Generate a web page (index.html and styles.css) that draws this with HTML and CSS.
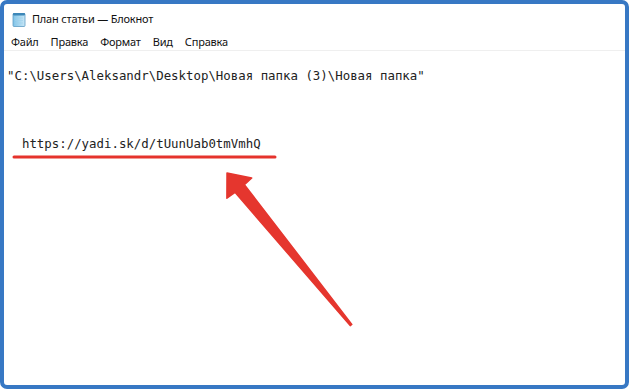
FILE: index.html
```html
<!DOCTYPE html>
<html>
<head>
	<meta charset="utf-8">
	<title>План статьи — Блокнот</title>
	<link rel="stylesheet" href="styles.css">
</head>
<body>
	<div class="window">
		<div class="titlebar">
			<svg class="appicon" width="14" height="15" viewBox="0 0 14 15">
				<defs>
					<linearGradient id="pad" x1="0" y1="0" x2="1" y2="0">
						<stop offset="0" stop-color="#7fc3e8"/>
						<stop offset="1" stop-color="#c9e7f6"/>
					</linearGradient>
				</defs>
				<rect x="1" y="1.5" width="12" height="13" rx="1" fill="url(#pad)" stroke="#5d9cc4" stroke-width="0.8"/>
				<rect x="1" y="1" width="12" height="2.4" rx="0.8" fill="#3d87b8"/>
				<line x1="3" y1="6" x2="11" y2="6" stroke="#9fd0ea" stroke-width="0.6"/>
				<line x1="3" y1="8.5" x2="11" y2="8.5" stroke="#9fd0ea" stroke-width="0.6"/>
				<line x1="3" y1="11" x2="11" y2="11" stroke="#9fd0ea" stroke-width="0.6"/>
			</svg>
			<span class="title">План статьи — Блокнот</span>
		</div>
		<div class="menubar">
			<span class="menuitem">Файл</span>
			<span class="menuitem">Правка</span>
			<span class="menuitem">Формат</span>
			<span class="menuitem">Вид</span>
			<span class="menuitem">Справка</span>
		</div>
		<pre class="editor">"C:\Users\Aleksandr\Desktop\Новая папка (3)\Новая папка"



  https://yadi.sk/d/tUunUab0tmVmhQ</pre>
		<svg class="marks" width="630" height="391" viewBox="0 0 630 391">
			<line x1="14" y1="157" x2="275" y2="157" stroke="#e5332c" stroke-width="3" stroke-linecap="round"/>
			<polygon points="227,173 251.7,178 244.4,184.7 351.8,324.4 350.2,325.6 235,192.3 226.9,198.2" fill="#e5362e" stroke="#e5362e" stroke-width="1.5" stroke-linejoin="round"/>
		</svg>
	</div>
</body>
</html>
```

FILE: styles.css
```css
html, body{
	margin:0;
	padding:0;
	background:#fff;
}
.window{
	position:relative;
	box-sizing:border-box;
	width:629px;
	height:389px;
	border:4px solid #3778c4;
	border-radius:7px;
	background:#fff;
	overflow:hidden;
}
.titlebar{
	display:flex;
	align-items:center;
	gap:6px;
	height:29px;
	padding-left:8px;
	font-family:"Noto Sans", Arial, sans-serif;
	font-size:11px;
	letter-spacing:-0.2px;
	color:#111;
}
.appicon{
	display:block;
	margin-top:1px;
}
.menubar{
	display:flex;
	gap:12px;
	height:16px;
	padding:1px 0 0 7px;
	border-bottom:1px solid #efefef;
	font-family:"Noto Sans", Arial, sans-serif;
	font-size:11px;
	letter-spacing:-0.2px;
	line-height:15px;
	color:#111;
}
.editor{
	margin:0;
	padding:15.5px 3px 0;
	font-family:"DejaVu Sans Mono", "Liberation Mono", monospace;
	font-size:12.4px;
	line-height:17.2px;
	color:#222;
}
.marks{
	position:absolute;
	left:-4px;
	top:-4px;
	pointer-events:none;
}
```
